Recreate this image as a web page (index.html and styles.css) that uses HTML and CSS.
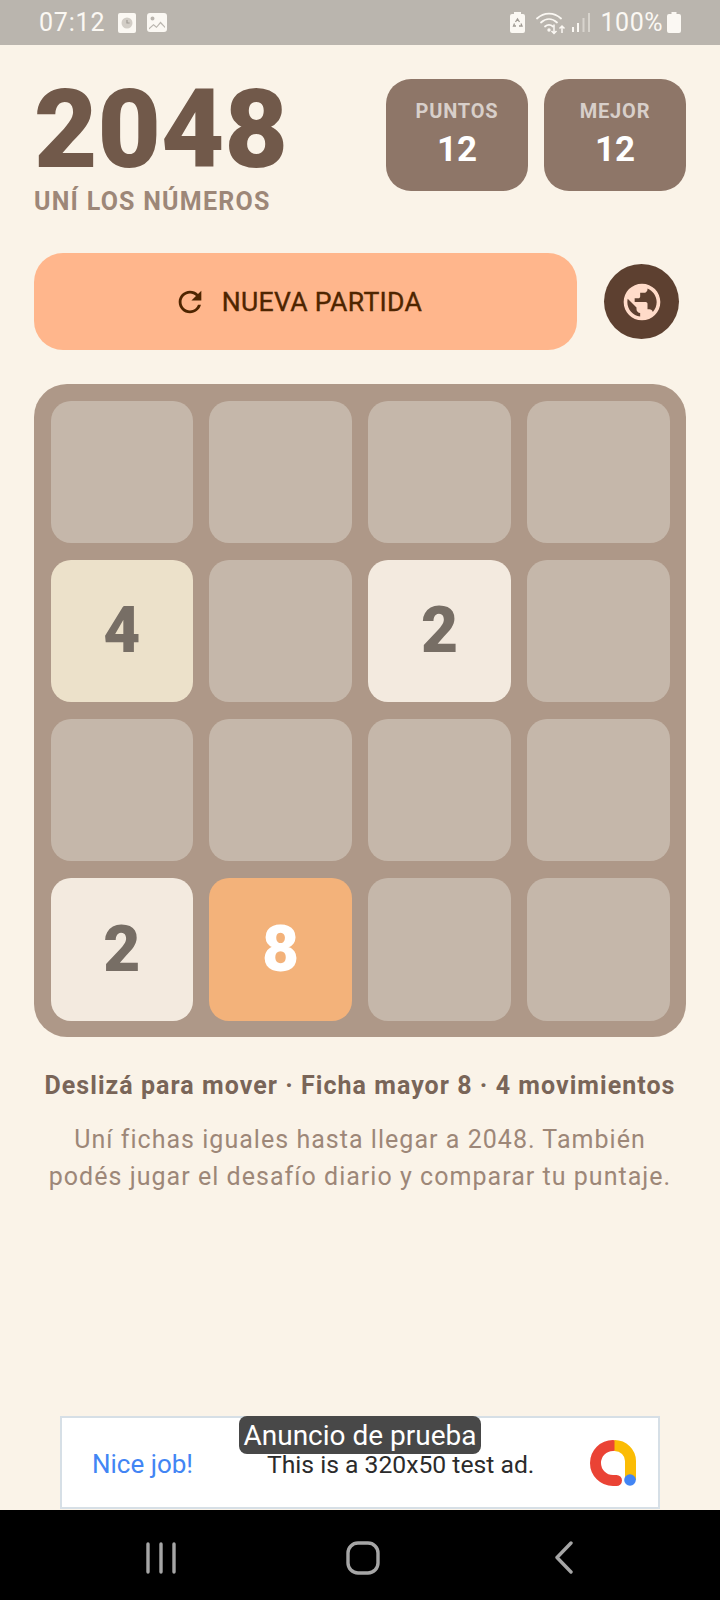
FILE: index.html
```html
<!DOCTYPE html>
<html lang="es">
<head>
<meta charset="utf-8">
<title>2048</title>
<link rel="stylesheet" href="styles.css">
</head>
<body>
<div class="status">
  <span class="time">07:12</span>
  <svg class="si" width="18" height="20" viewBox="0 0 18 20"><path fill="#fbf8f3" d="M2 0h14a2 2 0 0 1 2 2v16a2 2 0 0 1-2 2H2a2 2 0 0 1-2-2V2a2 2 0 0 1 2-2z"/><circle cx="9" cy="10" r="5.500" fill="#d2cdc6"/><path d="M9 7v3h2.600" fill="none" stroke="#a09b94" stroke-width="1.200"/></svg>
  <svg class="si si2" width="20" height="19" viewBox="0 0 20 19"><path fill="#fbf8f3" fill-rule="evenodd" d="M3 0h14a3 3 0 0 1 3 3v13a3 3 0 0 1-3 3H3a3 3 0 0 1-3-3V3a3 3 0 0 1 3-3zM5.500 3.500a2 2 0 1 0 0 4 2 2 0 0 0 0-4zM2 15l4.500-4 3 2.500 4-5 4.500 5v1.500l-4.500-4.500-4 4.500-3-2.500L2 16.500z"/></svg>
  <span class="grow"></span>
  <svg class="si" width="15" height="21" viewBox="0 0 15 21"><path fill="#fbf8f3" d="M4 0h7v2h2a2 2 0 0 1 2 2v15a2 2 0 0 1-2 2H2a2 2 0 0 1-2-2V4a2 2 0 0 1 2-2h2z"/><path d="M5.500 10l2-3 2 3M11 11.500l1 2.500H9M6 14H3.500l1-2.500" fill="none" stroke="#a09b94" stroke-width="1.300"/></svg>
  <svg class="wifi" width="30" height="24" viewBox="0 0 30 24"><g fill="none" stroke="#fbf8f3" stroke-width="1.800" stroke-linecap="round"><path d="M1 7.500C8 1 18 1 25 7.500"/><path d="M5 11.500C10 7 16 7 21 11.500"/><path d="M9 15.500c3-2.500 5-2.500 8 0"/></g><circle cx="13" cy="19" r="1.700" fill="#fbf8f3"/><path d="M18 13.500v9m-2.500-2.500l2.500 2.500 2.500-2.500M26 22v-7m-2.500 2.500L26 15l2.500 2.500" fill="none" stroke="#fbf8f3" stroke-width="1.500"/></svg>
  <svg class="sig" width="18" height="19" viewBox="0 0 18 19"><rect x="0" y="14" width="2" height="5" fill="#fbf8f3"/><rect x="5" y="10" width="2" height="9" fill="#fbf8f3"/><rect x="10.500" y="5" width="2" height="14" fill="#d8d4cd"/><rect x="16" y="0" width="2" height="19" fill="#d8d4cd"/></svg>
  <span class="pct">100%</span>
  <svg class="si" width="14" height="21" viewBox="0 0 14 21"><path fill="#fbf8f3" d="M4.500 0h5v2H12a2 2 0 0 1 2 2v15a2 2 0 0 1-2 2H2a2 2 0 0 1-2-2V4a2 2 0 0 1 2-2h2.500z"/></svg>
</div>

<main class="main">
  <header class="head">
    <div class="brand">
      <h1 class="title">2048</h1>
      <p class="sub">UNÍ LOS NÚMEROS</p>
    </div>
    <div class="stats">
      <div class="stat"><span class="lab">PUNTOS</span><span class="val">12</span></div>
      <div class="stat"><span class="lab">MEJOR</span><span class="val">12</span></div>
    </div>
  </header>

  <div class="actions">
    <button class="btn">
      <svg width="34" height="34" viewBox="0 0 24 24"><path fill="#4e2500" d="M17.650 6.350A7.958 7.958 0 0 0 12 4c-4.420 0-7.990 3.580-7.990 8s3.570 8 7.990 8c3.730 0 6.840-2.550 7.730-6h-2.080A5.990 5.990 0 0 1 12 18c-3.310 0-6-2.690-6-6s2.690-6 6-6c1.660 0 3.140.69 4.220 1.780L13 11h7V4l-2.350 2.350z"/></svg>
      <span>NUEVA PARTIDA</span>
    </button>
    <div class="globe">
      <svg width="44" height="44" viewBox="0 0 24 24"><path fill="#ffdbc9" d="M12 2C6.480 2 2 6.480 2 12s4.480 10 10 10 10-4.480 10-10S17.520 2 12 2zm-1 17.930c-3.950-.49-7-3.850-7-7.930 0-.62.080-1.210.21-1.790L9 15v1c0 1.100.9 2 2 2v1.930zm6.900-2.540c-.26-.81-1-1.390-1.900-1.390h-1v-3c0-.55-.45-1-1-1H8v-2h2c.55 0 1-.45 1-1V7h2c1.100 0 2-.9 2-2v-.41c2.930 1.190 5 4.060 5 7.410 0 2.080-.8 3.970-2.100 5.390z"/></svg>
    </div>
  </div>

  <section class="board">
    <div class="tile"></div><div class="tile"></div><div class="tile"></div><div class="tile"></div>
    <div class="tile t4">4</div><div class="tile"></div><div class="tile t2">2</div><div class="tile"></div>
    <div class="tile"></div><div class="tile"></div><div class="tile"></div><div class="tile"></div>
    <div class="tile t2">2</div><div class="tile t8">8</div><div class="tile"></div><div class="tile"></div>
  </section>

  <p class="hint">Deslizá para mover · Ficha mayor 8 · 4 movimientos</p>
  <p class="desc">Uní fichas iguales hasta llegar a 2048. También<br>podés jugar el desafío diario y comparar tu puntaje.</p>
</main>

<aside class="ad">
  <span class="ad-label">Anuncio de prueba</span>
  <span class="nice">Nice job!</span>
  <span class="ad-text">This is a 320x50 test ad.</span>
  <svg class="ad-logo" width="46" height="46" viewBox="0 0 46 46">
    <path d="M23 5.500A17.500 17.500 0 0 0 23 40.500H26.500" fill="none" stroke="#ea4335" stroke-width="11" stroke-linecap="round"/>
    <path d="M24.500 5.500c9 0 16 7 16 15.500V40" fill="none" stroke="#fbbc04" stroke-width="11"/>
    <circle cx="40" cy="40" r="5.800" fill="#4285f4"/>
  </svg>
</aside>

<nav class="nav">
  <svg width="30" height="32" viewBox="0 0 30 32"><g stroke="#a6a6a6" stroke-width="3.400" stroke-linecap="round"><path d="M2 2v28M15 2v28M28 2v28"/></g></svg>
  <svg width="34" height="34" viewBox="0 0 34 34"><rect x="2" y="2" width="30" height="30" rx="10" fill="none" stroke="#a6a6a6" stroke-width="3.400"/></svg>
  <svg width="20" height="33" viewBox="0 0 20 33"><path d="M17 2L3 16.500 17 31" fill="none" stroke="#a6a6a6" stroke-width="3.400" stroke-linecap="round" stroke-linejoin="round"/></svg>
</nav>
</body>
</html>
```
FILE: styles.css
```css
* { box-sizing: border-box; }
html, body { margin: 0; padding: 0; }
body {
  width: 720px;
  height: 1600px;
  overflow: hidden;
  display: flex;
  flex-direction: column;
  background: #faf3e8;
  font-family: Roboto, "Liberation Sans", sans-serif;
}
.status {
  height: 45px;
  flex: none;
  display: flex;
  align-items: center;
  padding: 0 39px 0 39px;
  background: #bab5ae;
  color: #fbf8f3;
  font-size: 25px;
}
.time { margin-right: 13px; letter-spacing: .8px; }
.si2 { margin-left: 11px; }
.grow { flex: 1; }
.wifi { margin-left: 11px; }
.sig { margin-left: 6px; }
.pct { margin-left: 11px; margin-right: 4px; letter-spacing: .5px; }
.main { flex: 1; padding: 0 34px; }
.head {
  display: flex;
  justify-content: space-between;
  height: 208px;
  padding-top: 34px;
}
.title {
  margin: 1px 0 0;
  font-size: 109.5px;
  line-height: 100px;
  font-weight: 900;
  color: #71594a;
}
.sub {
  margin: 7px 0 0;
  font-size: 25px;
  line-height: 30px;
  font-weight: 700;
  color: #9d8778;
  letter-spacing: 1.25px;
}
.stats { display: flex; gap: 16px; }
.stat {
  width: 142px;
  height: 112px;
  border-radius: 25px;
  background: #8e7668;
  display: flex;
  flex-direction: column;
  align-items: center;
  padding-top: 19px;
}
.lab { font-size: 20px; line-height: 26px; font-weight: 700; color: #d8cfca; letter-spacing: .8px; }
.val { margin-top: 2px; font-size: 35px; line-height: 48px; font-weight: 700; color: #fff; }
.actions { display: flex; align-items: center; height: 97px; }
.btn {
  width: 543px;
  height: 97px;
  border: 0;
  border-radius: 29px;
  background: #ffb68c;
  color: #4e2500;
  font: 400 26.6px Roboto, sans-serif;
  letter-spacing: .3px;
  -webkit-text-stroke: .35px #4e2500;
  display: flex;
  align-items: center;
  justify-content: center;
  gap: 15px;
  padding: 0 16px 0 0;
}
.globe {
  width: 75px;
  height: 75px;
  margin-left: 27px;
  border-radius: 50%;
  background: #5d4030;
  display: flex;
  align-items: center;
  justify-content: center;
}
.board {
  margin-top: 34px;
  width: 652px;
  height: 653px;
  padding: 16.5px;
  border-radius: 33px;
  background: #ae9888;
  display: grid;
  grid-template-columns: repeat(4, 1fr);
  grid-template-rows: repeat(4, 1fr);
  gap: 16.5px;
}
.tile {
  border-radius: 20px;
  background: #c5b7aa;
  display: flex;
  align-items: center;
  justify-content: center;
  font-size: 64px;
  font-weight: 900;
  color: #776e65;
}
.t2 { background: #f3eadf; }
.t4 { background: #ece1ca; }
.t8 { background: #f3b27a; color: #fff; }
.hint {
  margin: 34px 0 0;
  text-align: center;
  font-size: 25px;
  line-height: 30px;
  font-weight: 700;
  color: #796558;
  letter-spacing: 1.04px;
}
.desc {
  margin: 20px 0 0;
  text-align: center;
  font-size: 25px;
  line-height: 37px;
  color: #9d8778;
  letter-spacing: 1.03px;
}
.ad {
  position: relative;
  flex: none;
  width: 600px;
  height: 93px;
  margin: 0 60px 1px;
  padding-top: 3px;
  background: #fff;
  border: 2px solid #d6dfe6;
  display: flex;
  align-items: center;
}
.ad-label {
  position: absolute;
  left: 177px;
  top: -2px;
  width: 242px;
  height: 38px;
  border-radius: 8px;
  background: #484848;
  color: #fff;
  font-size: 28px;
  line-height: 40px;
  text-align: center;
}
.nice { margin-left: 30px; width: 175px; font-size: 26px; color: #4285f4; }
.ad-text { width: 290px; font-size: 24.7px; color: #2b2b2b; }
.ad-logo { margin-left: 33px; margin-top: -3px; }
.nav {
  flex: none;
  height: 90px;
  background: #000;
  display: flex;
  align-items: center;
  gap: 170px;
  padding: 5px 0 0 146px;
}
.nav svg:last-child { margin-left: 4px; }
```
